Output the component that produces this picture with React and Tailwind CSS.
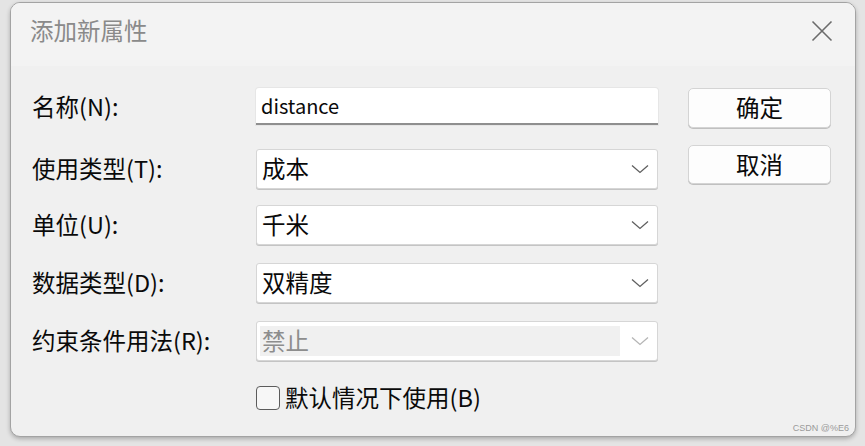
import React from "react";

const font = { fontFamily: '"Noto Sans CJK SC", "Noto Sans", sans-serif' };

function Chevron({ color = "#5f5f5f" }) {
  return (
    <svg width="18" height="10" viewBox="0 0 18 10" fill="none">
      <path d="M1 1.5 L9 8.5 L17 1.5" stroke={color} strokeWidth="1.3" />
    </svg>
  );
}

function Select({ value, disabled, className = "" }) {
  return (
    <div
      className={`flex h-[40px] w-[402px] items-center justify-between rounded-[3px] border border-[#d6d6d6] bg-white pr-[8px] shadow-[0_1px_0_#c4c4c4] ${className}`}
    >
      {disabled ? (
        <div className="ml-[3px] flex h-[30px] w-[360px] items-center bg-[#f0f0f0] pl-[2px] text-[23.5px] text-[#8d8d8d]">
          {value}
        </div>
      ) : (
        <span className="pl-[5px] text-[23.5px] text-[#0a0a0a]">{value}</span>
      )}
      <Chevron color={disabled ? "#b5b5b5" : "#5f5f5f"} />
    </div>
  );
}

function Label({ children, className = "" }) {
  return (
    <div className={`flex items-center whitespace-nowrap text-[23.5px] text-[#0a0a0a] ${className}`}>{children}</div>
  );
}

export default function App() {
  return (
    <div className="h-[446px] w-[865px] bg-[#e4e4e4] pl-[10px] pt-[2px]" style={font}>
      <div className="relative h-[435px] w-[846px] overflow-hidden rounded-[10px] border border-[#a3a3a3] bg-[#f0f0f0] shadow-[0_2px_4px_rgba(0,0,0,0.25)]">
        <div className="flex h-[63px] items-center justify-between bg-[#f3f3f3] pb-[8px] pl-[19px] pr-[22px]">
          <span className="text-[23.5px] text-[#8a8a8a]">添加新属性</span>
          <svg width="22" height="22" viewBox="0 0 22 22" fill="none">
            <path d="M1.5 1.5 L20.5 20.5 M20.5 1.5 L1.5 20.5" stroke="#6b6b6b" strokeWidth="1.6" />
          </svg>
        </div>
        <div className="flex pt-[22px]">
          <div className="flex w-[245px] flex-col pl-[21px]">
            <Label className="h-[37px]">名称(N):</Label>
            <Label className="mt-[24px] h-[40px]">使用类型(T):</Label>
            <Label className="mt-[16px] h-[40px]">单位(U):</Label>
            <Label className="mt-[18px] h-[40px]">数据类型(D):</Label>
            <Label className="mt-[18px] h-[40px]">约束条件用法(R):</Label>
          </div>
          <div className="flex flex-col">
            <div className="flex h-[37px] w-[402px] items-center rounded-t-[3px] border-b-2 border-[#8f8f8f] bg-white pl-[5px] shadow-[0_0_0_1px_#e6e6e6] text-[20px] text-[#0a0a0a]">
              distance
            </div>
            <Select value="成本" className="mt-[24px]" />
            <Select value="千米" className="mt-[16px]" />
            <Select value="双精度" className="mt-[18px]" />
            <Select value="禁止" disabled className="mt-[18px]" />
            <div className="mt-[24px] flex h-[26px] items-center">
              <div className="h-[24px] w-[24px] shrink-0 rounded-[4px] border-[1.5px] border-[#5c5c5c] bg-[#f7f7f7]" />
              <span className="ml-[5px] whitespace-nowrap text-[23.5px] text-[#0a0a0a]">默认情况下使用(B)</span>
            </div>
          </div>
          <div className="ml-[30px] flex flex-col">
            <button className="flex h-[40px] w-[143px] items-center justify-center rounded-[5px] border border-[#d4d4d4] bg-[#fdfdfd] text-[23.5px] text-[#0a0a0a] shadow-[0_1px_0_#c0c0c0]">
              确定
            </button>
            <button className="mt-[17px] flex h-[39px] w-[143px] items-center justify-center rounded-[5px] border border-[#d4d4d4] bg-[#fdfdfd] text-[23.5px] text-[#0a0a0a] shadow-[0_1px_0_#c0c0c0]">
              取消
            </button>
          </div>
        </div>
        <div
          className="absolute bottom-[1px] right-[6px] text-[9px] text-[#9a9a9a]"
          style={{ fontFamily: '"Liberation Sans", sans-serif' }}
        >
          CSDN @%E6
        </div>
      </div>
    </div>
  );
}
